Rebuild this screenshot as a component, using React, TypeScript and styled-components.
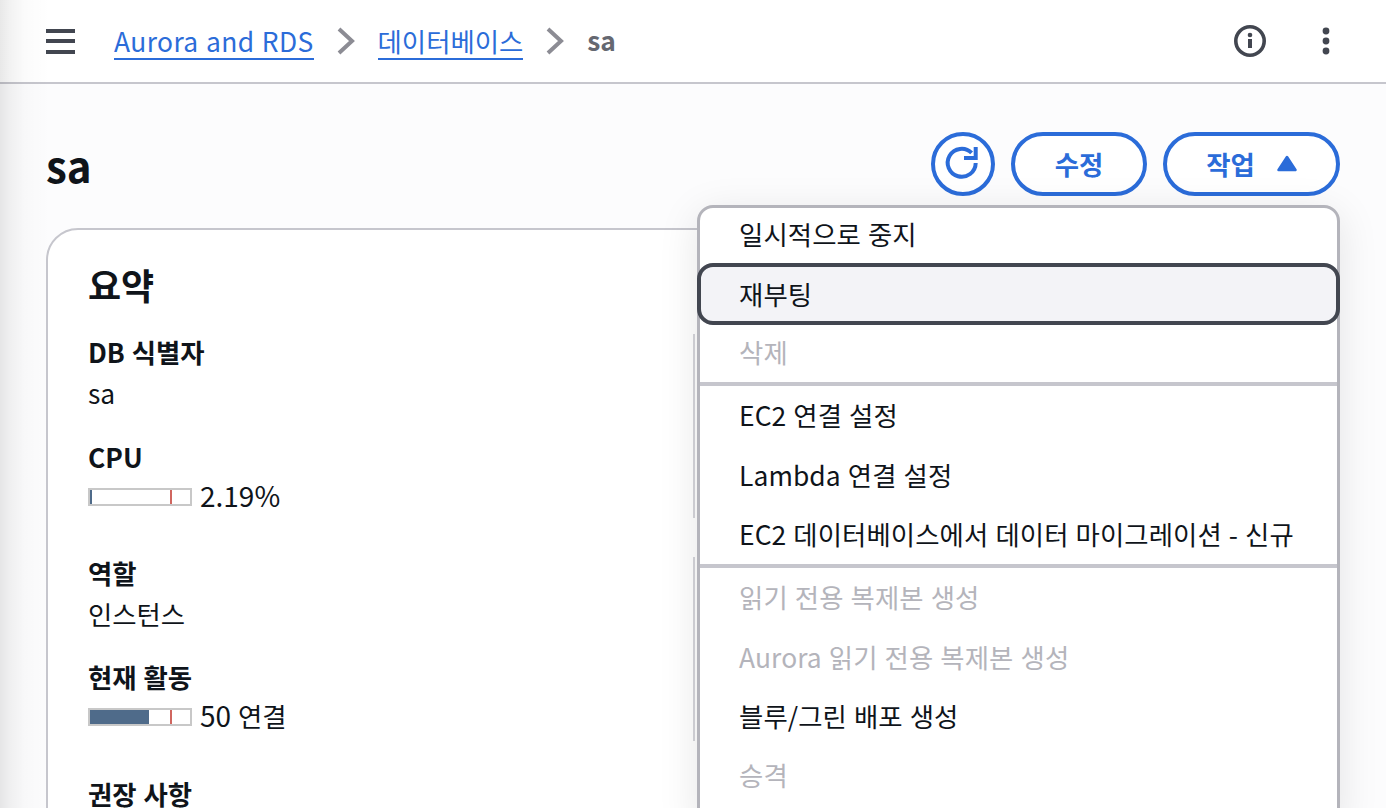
import React from 'react';
import styled, { createGlobalStyle, css } from 'styled-components';

const GlobalStyle = createGlobalStyle`
  html, body {
    margin: 0;
    height: 808px;
    overflow: hidden;
    background: #fcfcfd;
  }
  * {
    box-sizing: border-box;
  }
`;

const FONT = `"Noto Sans CJK KR", "Noto Sans", sans-serif`;
const TEXT_SIZE = '26.4px';

const Page = styled.div`
  position: relative;
  width: 1386px;
  height: 808px;
  overflow: hidden;
  font-family: ${FONT};
  word-spacing: 1px;
  color: #0f141a;
  background: #fcfcfd;

  &::before {
    content: '';
    position: absolute;
    top: 0;
    left: 0;
    bottom: 0;
    width: 50px;
    background: linear-gradient(
      90deg,
      rgba(0, 0, 0, 0.09),
      rgba(0, 0, 0, 0.05) 10px,
      rgba(0, 0, 0, 0.015) 25px,
      rgba(0, 0, 0, 0)
    );
    pointer-events: none;
    z-index: 3;
  }
`;

const TopBar = styled.header`
  height: 84px;
  padding: 0 56px 0 46px;
  display: flex;
  align-items: center;
  background: #fff;
  border-bottom: 2px solid #c6c6cd;
`;

const Burger = styled.div`
  width: 29px;
  height: 25px;
  margin-right: 39px;
  display: flex;
  flex-direction: column;
  justify-content: space-between;

  span {
    display: block;
    height: 4px;
    background: #424650;
  }
`;

const Crumbs = styled.nav`
  display: flex;
  align-items: center;
  font-size: ${TEXT_SIZE};
  line-height: 36px;
  flex: 1;
`;

const CrumbLink = styled.a<{ $tracking?: number }>`
  color: #2b6cd9;
  border-bottom: 2px solid #2b6cd9;
  line-height: 35px;
  letter-spacing: ${p => p.$tracking ?? 0}px;
`;

const CrumbSep = styled.span`
  display: flex;
  width: 64px;
  justify-content: center;
`;

const CrumbCurrent = styled.span`
  color: #656871;
  font-weight: 700;
  margin-top: -2px;
`;

const TopIcons = styled.div`
  display: flex;
  align-items: center;
  gap: 56px;
  color: #424650;

  svg {
    display: block;
  }
`;

const Main = styled.main`
  padding: 0 46px;
`;

const TitleRow = styled.div`
  height: 145px;
  padding-top: 48px;
  display: flex;
  align-items: flex-start;
  justify-content: space-between;
`;

const Title = styled.h1`
  margin: 1px 0 0;
  font-size: 42px;
  line-height: 64px;
  font-weight: 700;
`;

const Actions = styled.div`
  display: flex;
  gap: 16px;
`;

const PillButton = styled.button<{ $width: number }>`
  height: 64px;
  width: ${p => p.$width}px;
  border: 4px solid #2b6cd9;
  border-radius: 32px;
  background: #fff;
  color: #2b6cd9;
  font-family: ${FONT};
  font-size: ${TEXT_SIZE};
  font-weight: 700;
  display: flex;
  align-items: center;
  justify-content: center;
  gap: 22px;
  padding: 0 0 2px;
`;

const Card = styled.section`
  position: relative;
  height: 640px;
  margin-top: -1px;
  background: #fff;
  border: 2px solid #c6c6cd;
  border-radius: 32px 32px 0 0;
  padding: 30px 40px;
`;

const CardTitle = styled.h2`
  margin: 0 0 24px;
  font-size: 36px;
  line-height: 48px;
  font-weight: 700;
`;

const Field = styled.div<{ $gap: number }>`
  margin-bottom: ${p => p.$gap}px;
`;

const Label = styled.div`
  font-size: ${TEXT_SIZE};
  line-height: 40px;
  font-weight: 700;
`;

const Value = styled.div`
  font-size: ${TEXT_SIZE};
  line-height: 42px;
  display: flex;
  align-items: center;
  gap: 8px;
`;

const Metric = styled.span`
  margin-top: -3px;

  span {
    font-size: 28px;
  }
`;

const Meter = styled.div`
  position: relative;
  width: 104px;
  height: 18px;
  border: 2px solid #c8c8c8;
  background: #fff;
`;

const MeterFill = styled.div`
  height: 100%;
  background: #4f6b8a;
`;

const MeterMark = styled.div`
  position: absolute;
  top: 0;
  bottom: 0;
  left: 80px;
  width: 2px;
  background: #d0665f;
`;

const Divider = styled.div<{ $top: number }>`
  position: absolute;
  left: 645px;
  top: ${p => p.$top}px;
  width: 2px;
  height: 184px;
  background: #d5d5da;
`;

const Dropdown = styled.div`
  position: absolute;
  top: 205px;
  left: 697px;
  width: 643px;
  height: 620px;
  background: #fff;
  border: 3px solid #b4b4bb;
  border-radius: 16px 16px 0 0;
  box-shadow: 0 8px 40px rgba(0, 0, 0, 0.1);
  z-index: 2;
`;

// the list is scrolled a little, so the first row starts above the frame
const Group = styled.div<{ $first?: boolean; $last?: boolean }>`
  ${p =>
    p.$first &&
    css`
      margin-top: -4px;
    `}
  ${p =>
    !p.$last &&
    css`
      border-bottom: 4px solid #c6c6cd;
    `}
`;

const Item = styled.div<{ $disabled?: boolean; $active?: boolean }>`
  height: 59.33px;
  padding: 0 39px 1px;
  display: flex;
  align-items: center;
  font-size: ${TEXT_SIZE};
  letter-spacing: 0.1px;
  color: ${p => (p.$disabled ? '#b4b4bb' : '#0f141a')};
  ${p =>
    p.$active &&
    css`
      position: relative;
      height: 62px;
      margin: 0 -3px -3px;
      padding: 0 38px 2px;
      background: #f3f3f7;
      border: 4px solid #424650;
      border-radius: 16px;
    `}
`;

const menuGroups = [
  [
    { label: '일시적으로 중지' },
    { label: '재부팅', active: true },
    { label: '삭제', disabled: true },
  ],
  [
    { label: 'EC2 연결 설정' },
    { label: 'Lambda 연결 설정' },
    { label: 'EC2 데이터베이스에서 데이터 마이그레이션 - 신규' },
  ],
  [
    { label: '읽기 전용 복제본 생성', disabled: true },
    { label: 'Aurora 읽기 전용 복제본 생성', disabled: true },
    { label: '블루/그린 배포 생성' },
    { label: '승격', disabled: true },
  ],
];

const ChevronIcon = () => (
  <svg width="20" height="28" viewBox="0 0 20 28" fill="none">
    <path d="M3 2 L16 14 L3 26" stroke="#8c8c94" strokeWidth="4" />
  </svg>
);

const InfoIcon = () => (
  <svg width="32" height="32" viewBox="0 0 32 32" fill="none">
    <circle cx="16" cy="16" r="14.2" stroke="currentColor" strokeWidth="3.6" />
    <circle cx="16" cy="10" r="2.3" fill="currentColor" />
    <rect x="14" y="14" width="4" height="9" fill="currentColor" />
  </svg>
);

const DotsIcon = () => (
  <svg width="8" height="28" viewBox="0 0 8 28" fill="currentColor">
    <circle cx="4" cy="4" r="3.4" />
    <circle cx="4" cy="14" r="3.4" />
    <circle cx="4" cy="24" r="3.4" />
  </svg>
);

const RefreshIcon = () => (
  <svg width="32" height="32" viewBox="1 0 32 32" fill="none" stroke="#2b6cd9" strokeWidth="4" overflow="visible">
    <path d="M29.7 16 A14 14 0 1 1 25.6 5.9" />
    <path d="M29.7 0 V11 H18" />
  </svg>
);

const CaretIcon = () => (
  <svg width="20" height="17" viewBox="0 0 20 17">
    <path d="M10 2 L18.5 15 H1.5 Z" fill="#2b6cd9" stroke="#2b6cd9" strokeWidth="2.5" strokeLinejoin="round" />
  </svg>
);

const App: React.FC = () => {
  return (
    <Page>
      <GlobalStyle />
      <TopBar>
        <Burger>
          <span />
          <span />
          <span />
        </Burger>
        <Crumbs>
          <CrumbLink $tracking={0.4}>Aurora and RDS</CrumbLink>
          <CrumbSep>
            <ChevronIcon />
          </CrumbSep>
          <CrumbLink>데이터베이스</CrumbLink>
          <CrumbSep>
            <ChevronIcon />
          </CrumbSep>
          <CrumbCurrent>sa</CrumbCurrent>
        </Crumbs>
        <TopIcons>
          <InfoIcon />
          <DotsIcon />
        </TopIcons>
      </TopBar>
      <Main>
        <TitleRow>
          <Title>sa</Title>
          <Actions>
            <PillButton $width={64}>
              <RefreshIcon />
            </PillButton>
            <PillButton $width={136}>수정</PillButton>
            <PillButton $width={177}>
              작업
              <CaretIcon />
            </PillButton>
          </Actions>
        </TitleRow>
        <Card>
          <CardTitle>요약</CardTitle>
          <Field $gap={23}>
            <Label>DB 식별자</Label>
            <Value>sa</Value>
          </Field>
          <Field $gap={36}>
            <Label>CPU</Label>
            <Value>
              <Meter>
                <MeterFill style={{ width: '2.19%' }} />
                <MeterMark />
              </Meter>
              <Metric>
                <span>2.19%</span>
              </Metric>
            </Value>
          </Field>
          <Field $gap={22}>
            <Label>역할</Label>
            <Value>인스턴스</Value>
          </Field>
          <Field $gap={37}>
            <Label>현재 활동</Label>
            <Value>
              <Meter>
                <MeterFill style={{ width: '59%' }} />
                <MeterMark />
              </Meter>
              <Metric>
                <span>50</span> 연결
              </Metric>
            </Value>
          </Field>
          <Label>권장 사항</Label>
          <Divider $top={104} />
          <Divider $top={327} />
        </Card>
      </Main>
      <Dropdown>
        {menuGroups.map((group, i) => (
          <Group key={i} $first={i === 0} $last={i === menuGroups.length - 1}>
            {group.map(item => (
              <Item key={item.label} $disabled={item.disabled} $active={item.active}>
                {item.label}
              </Item>
            ))}
          </Group>
        ))}
      </Dropdown>
    </Page>
  );
};

export default App;
